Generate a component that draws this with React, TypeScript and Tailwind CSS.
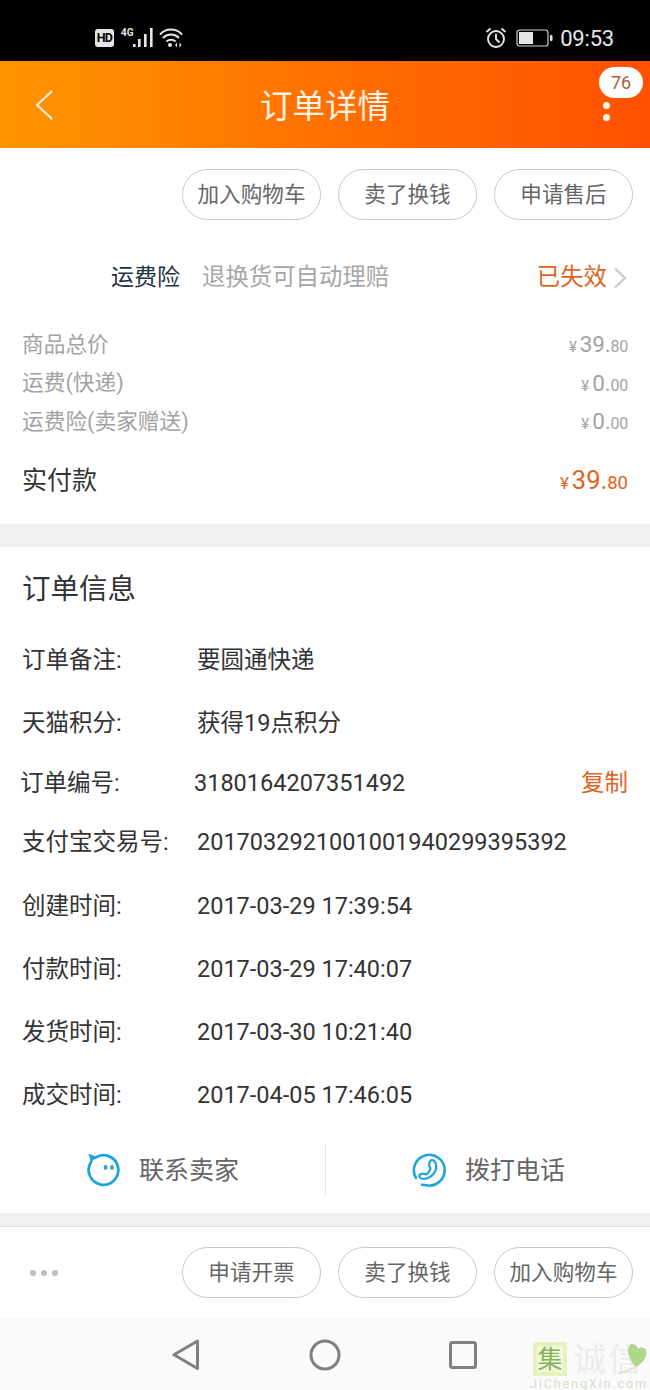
const FONT = "font-['Roboto','Noto_Sans_CJK_SC',sans-serif]";

const PillButton = ({ label }: { label: string }) => (
  <button className="flex h-[51px] w-[139px] items-center justify-center rounded-full border border-[#c8c8c8] bg-white pt-[2px] text-[21.6px] text-[#666666]">
    {label}
  </button>
);

const PriceRow = ({ label, big, small }: { label: string; big: string; small: string }) => (
  <div className="flex h-[38.5px] items-center justify-between text-[#a3a3a3]">
    <span className="text-[21.7px]">{label}</span>
    <span className="flex items-baseline">
      <span className="mr-[3px] text-[15px]">¥</span>
      <span className="text-[22.5px] tracking-[-0.2px]">{big}.</span>
      <span className="text-[16px] tracking-[-0.2px]">{small}</span>
    </span>
  </div>
);

const InfoRow = ({ label, value, height }: { label: string; value: string; height: string }) => (
  <div className={`flex items-center text-[23.5px] text-[#333333] ${height}`}>
    <span className="w-[175px] shrink-0">{label}</span>
    <span>{value}</span>
  </div>
);

const StatusBar = () => (
  <div className="flex h-[61px] items-center justify-between bg-black pl-[95px] pr-[36px] pt-[15px] text-white">
    <div className="flex items-center">
      <span className="flex h-[18px] w-[19px] items-center justify-center rounded-[3px] bg-[#e6e6e6] text-[12.5px] font-bold tracking-[-0.6px] text-black">
        HD
      </span>
      {/* 4G + signal */}
      <svg width="38" height="20" viewBox="0 0 38 20" className="ml-[2px]">
        <text x="5" y="8" fontSize="10" fontWeight="700" fill="#e6e6e6" fontFamily="Roboto">4G</text>
        <rect x="17" y="16" width="2.6" height="3" fill="#e6e6e6" />
        <rect x="22" y="11" width="2.6" height="8" fill="#e6e6e6" />
        <rect x="28" y="6" width="2.6" height="13" fill="#e6e6e6" />
        <rect x="34" y="0" width="2.6" height="19" fill="#e6e6e6" />
      </svg>
      {/* wifi */}
      <svg width="25" height="20" viewBox="0 0 25 20" className="ml-[5px]" fill="none" stroke="#e6e6e6" strokeWidth="1.9" strokeLinecap="round">
        <path d="M1.5 6 C7 0 17 0 22.5 6" />
        <path d="M4.5 9.5 C8.5 5.5 15.5 5.5 19.5 9.5" />
        <path d="M8 13 C10 11.3 14 11.3 16 13" />
        <circle cx="11" cy="17" r="2" fill="#e6e6e6" stroke="none" />
        <path d="M18 14.5 L16 17 L18 19.5 Z M20.5 14.5 L22.5 17 L20.5 19.5 Z" fill="#e6e6e6" stroke="none" />
      </svg>
    </div>
    <div className="flex items-center">
      {/* alarm */}
      <svg width="22" height="22" viewBox="0 0 22 22" fill="none" stroke="#e6e6e6" strokeWidth="1.9" strokeLinecap="round">
        <circle cx="11" cy="12" r="8" />
        <path d="M11 7.5 V12 L14 15" />
        <path d="M2 4.5 L5 2 M20 4.5 L17 2" />
      </svg>
      {/* battery */}
      <svg width="37" height="20" viewBox="0 0 37 20" className="ml-[9px]">
        <rect x="1" y="2" width="31" height="16" rx="2.5" fill="none" stroke="#cfcfcf" strokeWidth="1.2" />
        <rect x="3" y="4" width="14" height="12" fill="#e6e6e6" />
        <rect x="34" y="7" width="2.5" height="6" rx="1" fill="#e6e6e6" />
      </svg>
      <span className="ml-[7px] text-[22px] tracking-[-0.2px] text-[#e6e6e6]">09:53</span>
    </div>
  </div>
);

const Header = () => (
  <div className="relative flex h-[87px] items-center justify-center bg-gradient-to-r from-[#ff9500] via-[#ff7000] to-[#ff5000] pt-[6px]">
    <svg width="18" height="30" viewBox="0 0 18 30" fill="none" className="absolute left-[35px] top-[29px]">
      <path d="M16.5 1.5 L2 15 L16.5 28.5" stroke="#ffeedd" strokeWidth="2.2" strokeLinecap="round" strokeLinejoin="round" />
    </svg>
    <span className="text-[32.5px] text-[#fff3e6]">订单详情</span>
    <span className="absolute right-[7px] top-[6px] flex h-[31px] w-[44px] items-center justify-center rounded-full bg-white text-[18px] text-[#a8603c]">
      76
    </span>
    <span className="absolute left-[603px] top-[41px] h-[7px] w-[7px] rounded-full bg-[#fff3e6]" />
    <span className="absolute left-[603px] top-[53px] h-[7px] w-[7px] rounded-full bg-[#fff3e6]" />
  </div>
);

const Watermark = () => (
  <div className="absolute bottom-[-1px] right-0 flex w-[117px] flex-col items-start">
    <div className="relative flex h-[34px] items-center">
      <span className="flex h-[34px] w-[34px] items-center justify-center border-[4px] border-[#e3f2bf] bg-[#f1f9d8] text-[25px] leading-none text-[#84b262]">
        集
      </span>
      <span className="ml-[6px] text-[33px] leading-none text-[#ececec]">诚</span>
      <span className="ml-[2px] text-[33px] leading-none text-[#ececec]">信</span>
      <svg width="33" height="34" viewBox="0 0 33 34" className="absolute left-[84px] top-0">
        <path d="M19 25 C10 17 9 3 15 2 C18 1.5 20 4 21 7 C23 5 27 5 29 8 C31 13 27 21 19 25 Z" fill="#aed78c" />
        <path d="M1 31 C7 30 13 28 19 25" fill="none" stroke="#d5e8c8" strokeWidth="1.5" />
      </svg>
    </div>
    <span className="ml-[-3px] mt-[1px] whitespace-nowrap text-[12.5px] leading-[14px] tracking-[1.9px] text-[#d3e2cc]">
      JiChengXin.com
    </span>
  </div>
);

export default function App() {
  return (
    <div className={`relative mx-auto flex h-[1390px] w-[650px] flex-col overflow-hidden bg-white ${FONT}`}>
      <StatusBar />
      <Header />

      {/* top actions + fee summary */}
      <div className="flex h-[376px] flex-col px-[22px]">
        <div className="mr-[-5px] mt-[21px] flex justify-end gap-[17px]">
          <PillButton label="加入购物车" />
          <PillButton label="卖了换钱" />
          <PillButton label="申请售后" />
        </div>

        <div className="mt-[41px] flex h-[34px] items-center pl-[89px]">
          <span className="text-[23px] text-[#1c3242]">运费险</span>
          <span className="ml-[22px] text-[23.4px] text-[#a6a6a6]">退换货可自动理赔</span>
          <span className="ml-auto mr-[6px] text-[23.4px] text-[#e0641f]">已失效</span>
          <svg width="14" height="22" viewBox="0 0 14 22" fill="none" className="mr-[1px]">
            <path d="M2 1.5 L12 11 L2 20.5" stroke="#cccccc" strokeWidth="2.4" strokeLinejoin="round" />
          </svg>
        </div>

        <div className="mt-[31px]">
          <PriceRow label="商品总价" big="39" small="80" />
          <PriceRow label="运费(快递)" big="0" small="00" />
          <PriceRow label="运费险(卖家赠送)" big="0" small="00" />
        </div>

        <div className="mt-[20px] flex h-[38px] items-center justify-between">
          <span className="text-[25px] text-[#333333]">实付款</span>
          <span className="flex items-baseline text-[#e0641f]">
            <span className="mr-[3px] text-[17px]">¥</span>
            <span className="text-[25.5px]">39.</span>
            <span className="text-[18.5px]">80</span>
          </span>
        </div>
      </div>

      <div className="h-[23px] bg-[#f1f1f1]" />

      {/* order info */}
      <div className="flex flex-col px-[22px]">
        <div className="flex h-[82px] items-center pt-[4px] text-[28.5px] text-[#333333]">订单信息</div>
        <InfoRow label="订单备注:" value="要圆通快递" height="h-[62px] pt-[2px]" />
        <InfoRow label="天猫积分:" value="获得19点积分" height="h-[65px]" />
        <div className="ml-[-2px] flex h-[54px] items-center pt-[2px] text-[23.5px] text-[#333333]">
          <span className="w-[174px] shrink-0">订单编号:</span>
          <span>3180164207351492</span>
          <span className="ml-auto text-[#e0641f]">复制</span>
        </div>
        <InfoRow label="支付宝交易号:" value="2017032921001001940299395392" height="h-[65px]" />
        <InfoRow label="创建时间:" value="2017-03-29 17:39:54" height="h-[63px]" />
        <InfoRow label="付款时间:" value="2017-03-29 17:40:07" height="h-[63px]" />
        <InfoRow label="发货时间:" value="2017-03-30 10:21:40" height="h-[63px]" />
        <InfoRow label="成交时间:" value="2017-04-05 17:46:05" height="h-[63px]" />
      </div>

      {/* contact row */}
      <div className="flex h-[86px] items-center">
        <div className="flex h-[52px] w-[326px] items-center justify-center border-r border-[#e8e8e8]">
          <svg width="36" height="36" viewBox="0 0 36 36" fill="none">
            <path d="M9.5 5.5 A14.8 14.8 0 1 1 5 10" stroke="#1fa4dc" strokeWidth="2.8" strokeLinecap="round" />
            <path d="M2.5 1.5 L11 5 L5 10.5 Z" fill="#1fa4dc" />
            <ellipse cx="19.5" cy="15.5" rx="1.8" ry="2.4" fill="#1fa4dc" />
            <ellipse cx="26" cy="15.5" rx="1.8" ry="2.4" fill="#1fa4dc" />
          </svg>
          <span className="ml-[17px] pt-[2px] text-[25px] text-[#666666]">联系卖家</span>
        </div>
        <div className="flex h-[52px] w-[324px] items-center justify-center">
          <svg width="36" height="36" viewBox="0 0 36 36" fill="none">
            <path d="M5 26 A15.4 15.4 0 1 1 15 33.3 L11 32.8" stroke="#1fa4dc" strokeWidth="2.6" strokeLinecap="round" />
            <path d="M21 8 C24 8 26 13 25 17 C24 22 18 27 13 27 C9 27 7 24 9 22.5 C12 20.5 14 22 15 22.5 C17 21.5 19.5 18 19.5 16 C18.5 15 17 13 19 9.5 C19.4 8.6 20 8 21 8 Z" stroke="#1fa4dc" strokeWidth="2.2" strokeLinejoin="round" />
          </svg>
          <span className="ml-[18px] pt-[2px] text-[25px] text-[#666666]">拨打电话</span>
        </div>
      </div>

      <div className="h-[14px] border-b border-[#e2e2e2] bg-[#f1f1f1]" />

      {/* bottom action bar */}
      <div className="flex h-[91px] items-center justify-between pl-[30px] pr-[17px]">
        <div className="flex gap-[5px]">
          <span className="h-[6px] w-[6px] rounded-full bg-[#bdbdbd]" />
          <span className="h-[6px] w-[6px] rounded-full bg-[#bdbdbd]" />
          <span className="h-[6px] w-[6px] rounded-full bg-[#bdbdbd]" />
        </div>
        <div className="flex gap-[17px]">
          <PillButton label="申请开票" />
          <PillButton label="卖了换钱" />
          <PillButton label="加入购物车" />
        </div>
      </div>

      {/* android nav */}
      <div className="relative flex h-[72px] items-center bg-[#fafafa] pl-[172px] pt-[2px]">
        <svg width="28" height="32" viewBox="0 0 28 32" fill="none">
          <path d="M25.5 2 V29.5 L2 15.8 Z" stroke="#808080" strokeWidth="3" strokeLinejoin="round" />
        </svg>
        <svg width="32" height="32" viewBox="0 0 32 32" fill="none" className="ml-[109px]">
          <circle cx="16" cy="16" r="14" stroke="#808080" strokeWidth="3" />
        </svg>
        <svg width="28" height="28" viewBox="0 0 28 28" fill="none" className="ml-[108px]">
          <rect x="1.5" y="1.5" width="25" height="25" rx="2" stroke="#808080" strokeWidth="3" />
        </svg>
        <Watermark />
      </div>
    </div>
  );
}
